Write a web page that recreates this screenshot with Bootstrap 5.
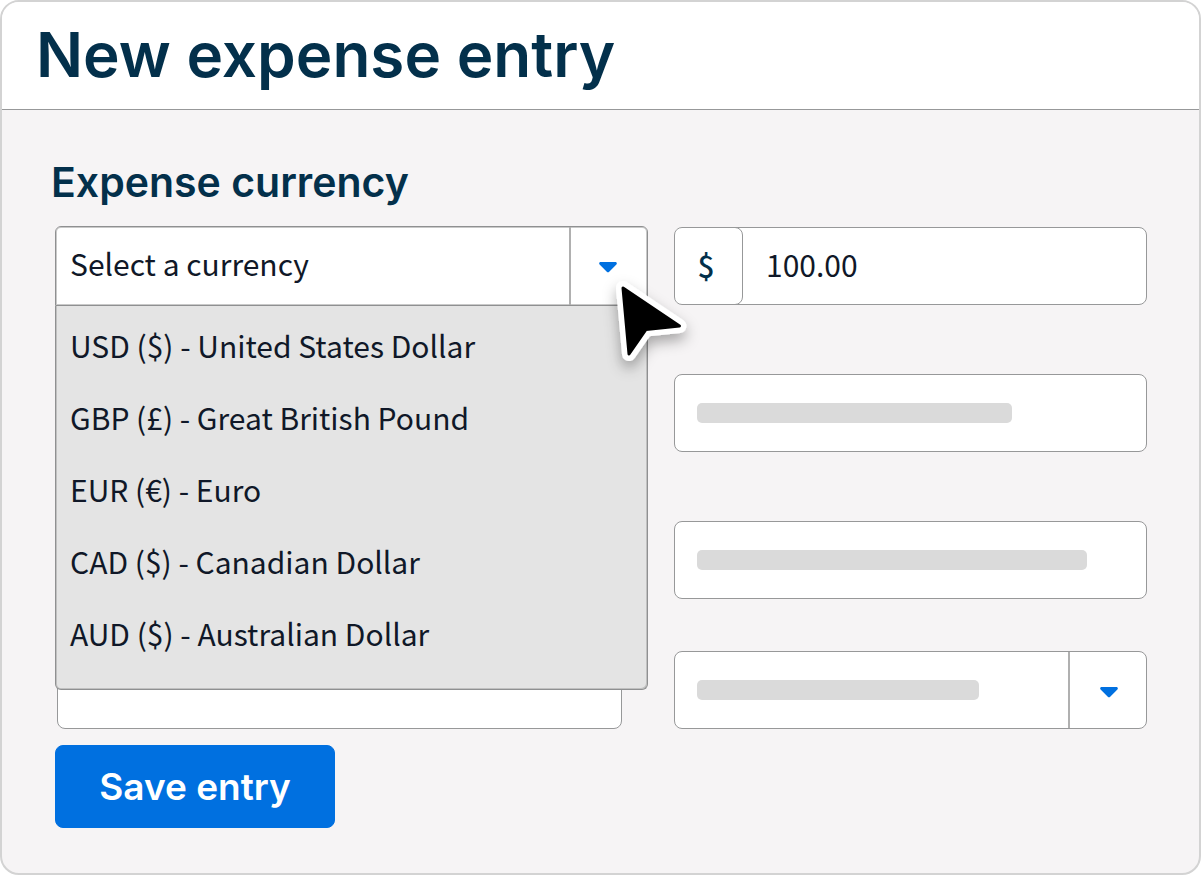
<!DOCTYPE html>
<html lang="en">
<head>
<meta charset="utf-8">
<meta name="viewport" content="width=device-width, initial-scale=1">
<title>New expense entry</title>
<link href="https://cdn.jsdelivr.net/npm/bootstrap@5.3.0/dist/css/bootstrap.min.css" rel="stylesheet">
<style>
:root { --navy: #03304b; --ink: #101828; --line: #979899; --blue: #0070e0; --field-h: 78px; }
body { font-family: "Noto Sans CJK SC", "Noto Sans", sans-serif; font-size: 30px; line-height: 48px; color: var(--ink); background: #fff; }
.panel { border: 2px solid #d3d3d3; border-radius: 19px; background: #f6f4f5; }
.panel-head { background: #fff; border-bottom: 1px solid var(--line); padding: 17px 34px 18px; }
.title-text, .label-text, .save-btn { font-family: Inter, sans-serif; font-weight: 600; }
.title-text { font-size: 62px; line-height: 72px; color: var(--navy); }
.label-text { font-size: 41px; line-height: 48px; color: var(--navy); margin: 0 0 20px -4px; display: block; }
.panel-body { padding: 48px 52px 44px 53px; }
.entry-grid { display: grid; grid-template-columns: 593fr 473fr; column-gap: 26px; }
.field { height: var(--field-h); border: 1px solid var(--line); border-radius: 8px; background: #fff; overflow: hidden; }
.picker .form-select { height: 80px; border: 1px solid #8f9091; border-radius: 6px 6px 0 0; box-shadow: inset 0 0 0 1px #c9c9c9; padding: 0 90px 6px 14px; font-size: 30px; line-height: 48px; color: var(--ink); background: #fff; }
.caret-cell { width: 78px; border-left: 2px solid #b0b0b0; padding: 4px 0 0 2px; pointer-events: none; }
.caret-cell svg { width: 18px; height: 11px; }
.picker .caret-cell { top: 1px; right: 1px; height: 78px; padding: 3px 2px 0 0; }
.picker .dropdown-menu { top: 80px; left: 0; width: 100%; margin: 0; padding: 4px 0 19px; border: 1px solid #8f9091; border-top: 0; border-radius: 0 0 6px 6px; box-shadow: inset -1px -1px 0 #c0c0c0, inset 1px 0 0 #c0c0c0; background: #e4e4e4; font-size: 30px; }
.picker .dropdown-item { padding: 11px 14px 13px; line-height: 48px; color: var(--ink); }
.pointer { top: 34px; right: -62px; width: 110px; height: 130px; z-index: 1100; pointer-events: none; }
.amount .currency-sign { width: 69px; margin: -1px 0 -1px -1px; border: 1px solid var(--line); border-radius: 8px !important; justify-content: center; background: #fff; color: var(--navy); font-size: 30px; font-weight: 500; padding: 0 5px 2px 0; }
.amount .form-control { border: 0; background: none; padding: 0 24px 4px; font-size: 30px; line-height: 48px; color: var(--ink); }
.bar { height: 20px; margin-left: 22px; border-radius: 5px; background: #dadada; }
.bar-md { width: 315px; } .bar-lg { width: 390px; } .bar-sm { width: 282px; }
.under-field { margin: auto 26px 0 2px; }
.right-stack { padding-top: 1px; gap: 69px; }
.right-stack .closer { margin-top: -17px; }
.save-btn { width: 280px; height: 83px; margin-top: 16px; border-radius: 8px; font-size: 37px; --bs-btn-bg: var(--blue); --bs-btn-border-color: var(--blue); }
</style>
</head>
<body>
<main class="panel min-vh-100 d-flex flex-column overflow-hidden">
  <header class="panel-head"><h1 class="title-text m-0">New expense entry</h1></header>
  <form class="panel-body">
    <label class="label-text" for="currency">Expense currency</label>
    <div class="entry-grid">
      <div class="d-flex flex-column">
        <div class="picker position-relative">
          <select class="form-select" id="currency"><option>Select a currency</option></select>
          <span class="caret-cell position-absolute d-flex align-items-center justify-content-center"><svg viewBox="0 0 18 11" aria-hidden="true"><path d="M1.6 0h14.8c1.300 0 1.900 1.500 1 2.400l-7.200 7.400c-.7.700-1.700.700-2.400 0L.6 2.400C-.3 1.500.3 0 1.600 0z" fill="#0070e0"/></svg></span>
          <ul class="dropdown-menu show">
            <li><button class="dropdown-item" type="button">USD ($) - United States Dollar</button></li>
            <li><button class="dropdown-item" type="button">GBP (£) - Great British Pound</button></li>
            <li><button class="dropdown-item" type="button">EUR (€) - Euro</button></li>
            <li><button class="dropdown-item" type="button">CAD ($) - Canadian Dollar</button></li>
            <li><button class="dropdown-item" type="button">AUD ($) - Australian Dollar</button></li>
          </ul>
          <svg class="pointer position-absolute" viewBox="0 0 110 130" aria-hidden="true">
            <defs><filter id="soft" x="-40%" y="-40%" width="180%" height="190%"><feDropShadow dx="0" dy="7" stdDeviation="7" flood-opacity=".32"/></filter></defs>
            <path d="M23 28L79.500 66 46 69.500 29 94z" fill="#fff" stroke="#fff" stroke-width="14" stroke-linejoin="round" filter="url(#soft)"/>
            <path d="M23 28L79.500 66 46 69.500 29 94z" fill="#000" stroke="#000" stroke-width="3" stroke-linejoin="round"/>
          </svg>
        </div>
        <div class="field under-field"></div>
      </div>
      <div class="right-stack d-flex flex-column">
        <div class="field amount input-group flex-nowrap">
          <span class="input-group-text currency-sign">$</span>
          <input class="form-control" type="text" value="100.00" aria-label="Amount">
        </div>
        <div class="field d-flex align-items-center"><div class="bar bar-md"></div></div>
        <div class="field d-flex align-items-center"><div class="bar bar-lg"></div></div>
        <div class="field closer d-flex align-items-center">
          <div class="bar bar-sm"></div>
          <span class="caret-cell h-100 ms-auto d-flex align-items-center justify-content-center"><svg viewBox="0 0 18 11" aria-hidden="true"><path d="M1.600 0h14.800c1.300 0 1.900 1.500 1 2.400l-7.200 7.400c-.7.700-1.700.700-2.400 0L.6 2.400C-.3 1.500.3 0 1.600 0z" fill="#0070e0"/></svg></span>
        </div>
      </div>
    </div>
    <button class="btn btn-primary save-btn" type="button">Save entry</button>
  </form>
</main>
<script src="https://cdn.jsdelivr.net/npm/bootstrap@5.3.0/dist/js/bootstrap.bundle.min.js"></script>
</body>
</html>
